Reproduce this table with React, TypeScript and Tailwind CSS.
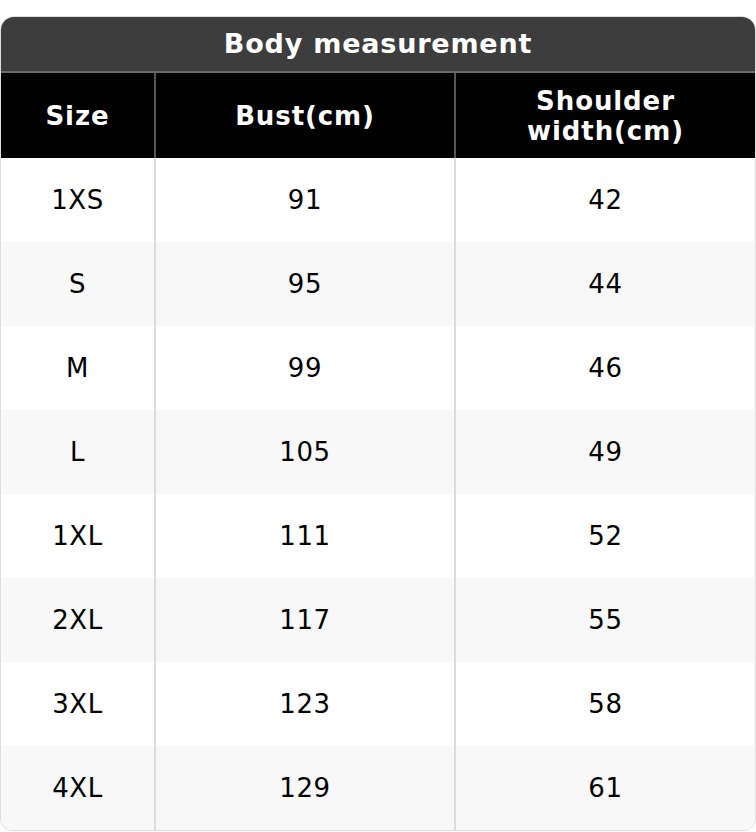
const ROWS = [
  ['1XS', '91', '42'],
  ['S', '95', '44'],
  ['M', '99', '46'],
  ['L', '105', '49'],
  ['1XL', '111', '52'],
  ['2XL', '117', '55'],
  ['3XL', '123', '58'],
  ['4XL', '129', '61'],
];

export default function App() {
  return (
    <div className="w-[756px] bg-white pt-4 font-['DejaVu_Sans',sans-serif]">
      <div className="overflow-hidden rounded-t-[14px] rounded-b-[12px] border border-[#dddddd]">
        <div className="flex h-[56px] items-center justify-center border-b-2 border-[#6b6b6b] bg-[#3d3d3d] text-[27px] font-bold tracking-[0.8px] text-white">
          Body measurement
        </div>
        <div className="grid h-[85px] grid-cols-[155px_300px_1fr] bg-black text-[26px] font-bold leading-[30px] tracking-[0.9px] text-white">
          <div className="flex items-center justify-center border-r-2 border-[#555555]">Size</div>
          <div className="flex items-center justify-center border-r-2 border-[#555555]">Bust(cm)</div>
          <div className="flex items-center justify-center text-center">
            Shoulder
            <br />
            width(cm)
          </div>
        </div>
        {ROWS.map((r, i) => (
          <div key={r[0]} className={`grid h-[84px] grid-cols-[155px_300px_1fr] text-[26px] tracking-[0.6px] text-black ${i % 2 ? 'bg-[#f8f8f8]' : 'bg-white'}`}>
            <div className="flex items-center justify-center border-r-2 border-[#dddddd]">{r[0]}</div>
            <div className="flex items-center justify-center border-r-2 border-[#dddddd]">{r[1]}</div>
            <div className="flex items-center justify-center">{r[2]}</div>
          </div>
        ))}
      </div>
    </div>
  );
}
